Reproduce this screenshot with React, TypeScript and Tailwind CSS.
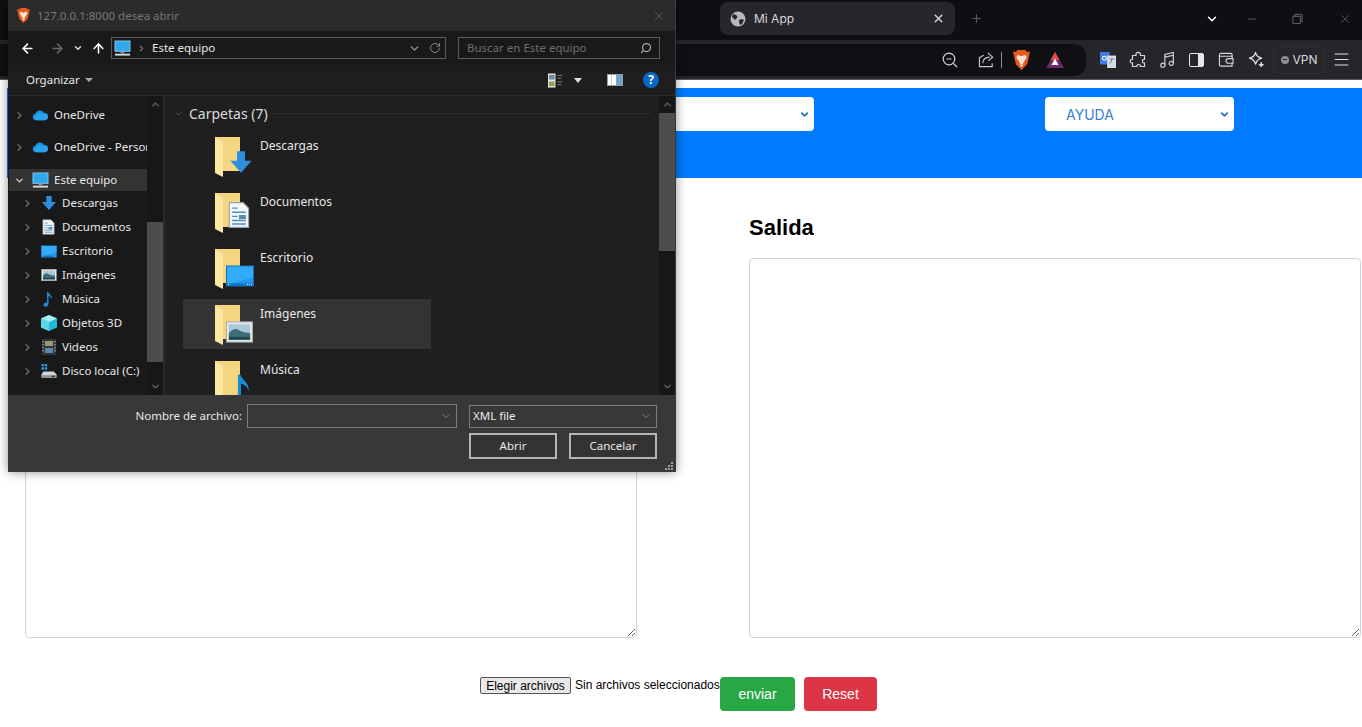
import { ChevronDown, ChevronRight, ChevronUp, Minus, Plus, X, ArrowLeft, ArrowRight, ArrowUp, RotateCw, Search, Menu } from "lucide-react"

const folderBack = "#f3d67f"
const folderFront = "#fbe6a2"

function PcIcon({ className }: { className?: string }) {
  return (
    <svg viewBox="0 0 18 18" className={className}>
      <rect x="1" y="1" width="16" height="11" fill="#2fa8ee" stroke="#9fd6f5" strokeWidth="0.8" />
      <rect x="7" y="12" width="4" height="2" fill="#8a9aa5" />
      <rect x="1" y="14.5" width="16" height="2" fill="#d6dde2" />
    </svg>
  )
}

function CloudIcon() {
  return (
    <svg viewBox="0 0 18 12" className="w-[17px] h-[12px]">
      <path d="M4 11.5a3.4 3.4 0 0 1-.5-6.7A5 5 0 0 1 12.6 3.6 4 4 0 0 1 17 7.7c0 2.2-1.6 3.8-3.8 3.8z" fill="#1a8fe0" />
      <path d="M5 11.5a2.6 2.6 0 0 1 0-5.2 3.6 3.6 0 0 1 6.6-1 3.2 3.2 0 0 1 5.4 2.6c0 2-1.5 3.6-3.6 3.6z" fill="#2aa2ee" />
    </svg>
  )
}

function DownArrow({ className }: { className?: string }) {
  return (
    <svg viewBox="0 0 18 18" className={className}>
      <path d="M6 1h6v7h5l-8 9-8-9h5z" fill="#2f8fdf" />
    </svg>
  )
}

function DocIcon({ className }: { className?: string }) {
  return (
    <svg viewBox="0 0 16 20" className={className}>
      <path d="M1 1h10l4 4v14H1z" fill="#f4f6f8" stroke="#9aa3ab" strokeWidth="0.8" />
      <path d="M3 5h4M3 8h10M3 11h4M3 14h10M3 16.5h10" stroke="#4e8fc4" strokeWidth="1" />
      <rect x="8" y="10" width="5" height="3" fill="#5b8aa8" />
    </svg>
  )
}

function DesktopIcon({ className }: { className?: string }) {
  return (
    <svg viewBox="0 0 28 21" className={className}>
      <rect x="0.5" y="0.5" width="27" height="20" fill="#1e98f0" stroke="#0f6fb8" />
      <path d="M1 1h26v11L1 19z" fill="#33abf8" />
      <rect x="1" y="18" width="26" height="2" fill="#0e71bd" />
      <path d="M2 19h1M21 19h1M23 19h1M25 19h1" stroke="#e8f4fc" strokeWidth="1" />
    </svg>
  )
}

function PictureIcon({ className }: { className?: string }) {
  return (
    <svg viewBox="0 0 28 22" className={className}>
      <rect x="0.5" y="0.5" width="27" height="21" fill="#e6e8ea" stroke="#a8a8a8" />
      <rect x="3" y="3" width="22" height="16" fill="#a9c8d8" />
      <path d="M3 12c4-4 7-5 10-3s8 3 12 3v7H3z" fill="#3f6f73" />
      <path d="M3 16h22v3H3z" fill="#22484f" />
    </svg>
  )
}

function NoteIcon({ className }: { className?: string }) {
  return (
    <svg viewBox="0 0 14 22" className={className}>
      <path d="M5 1h1.6c.3 3 6 5 5.4 11-.7-3-2.500-4.500-5-5v10.500c0 2.500-2.200 4-4 4s-3-1-3-2.500c0-2.200 2.500-3.500 5-3z" fill="#1b8cd8" />
    </svg>
  )
}

function CubeIcon({ className }: { className?: string }) {
  return (
    <svg viewBox="0 0 16 16" className={className}>
      <path d="M8 0l8 3.500v9L8 16 0 12.500v-9z" fill="#22b6d8" />
      <path d="M8 0l8 3.500L8 7 0 3.500z" fill="#a8ecf5" />
      <path d="M0 3.500 8 7v9L0 12.500z" fill="#5fd5ea" />
    </svg>
  )
}

function VideoIcon({ className }: { className?: string }) {
  return (
    <svg viewBox="0 0 14 16" className={className}>
      <rect width="14" height="16" fill="#31363c" />
      <rect x="3" y="2" width="8" height="5" fill="#9a9a6a" />
      <rect x="3" y="9" width="8" height="5" fill="#5e86a8" />
      <path d="M1 2v12M13 2v12" stroke="#c0c6cc" strokeWidth="1" strokeDasharray="1.500 1.500" />
    </svg>
  )
}

function DiskIcon({ className }: { className?: string }) {
  return (
    <svg viewBox="0 0 16 15" className={className}>
      <rect x="0" y="0" width="2.500" height="2.500" fill="#2aa2ee" />
      <rect x="3.500" y="0" width="2.500" height="2.500" fill="#2aa2ee" />
      <rect x="0" y="3.500" width="2.500" height="2.500" fill="#2aa2ee" />
      <rect x="3.500" y="3.500" width="2.500" height="2.500" fill="#2aa2ee" />
      <path d="M2 8h11l3 3v3H0v-3z" fill="#d0d4d8" />
      <rect x="0" y="12" width="16" height="3" fill="#8e9499" />
      <rect x="11" y="12.500" width="3" height="1.500" fill="#2c2c2c" />
    </svg>
  )
}

function LionIcon({ className }: { className?: string }) {
  return (
    <svg viewBox="0 0 18 21" className={className}>
      <path d="M5 0h8l2 2 3-.5-1.500 7L15 15l-6 6-6-6L1.500 8.500 0 1.500 3 2z" fill="#e9591e" />
      <path d="M5 5l4 1.500L13 5l1.500 3-3 4-1 3h-3l-1-3-3-4z" fill="#fbe3d0" />
      <path d="M7 15.500h4L9 18z" fill="#fff" />
    </svg>
  )
}

function ShareIcon({ className }: { className?: string }) {
  return (
    <svg viewBox="0 0 18 18" fill="none" stroke="#c8c8cc" strokeWidth="1.200" className={className}>
      <path d="M6 4.500 1.500 7v9.500h13.500V13" />
      <path d="M5 13c0-4 3-6.500 7.500-6.500M10.500 2 15.500 6.500 11 10.500" />
    </svg>
  )
}

function PuzzleIcon({ className }: { className?: string }) {
  return (
    <svg viewBox="0 0 18 18" fill="none" stroke="#d6d6da" strokeWidth="1.200" className={className}>
      <path d="M7 3.500a2.200 2.200 0 0 1 4.400 0c0 .6 0 1 .1 1h4v3.800c-2.800-.5-2.800 4.200 0 3.700v3.500h-4c.5-2.700-4.200-2.700-3.700 0H3.500v-3.500c-3 .5-3-4.200 0-3.700V4.500H7z" />
    </svg>
  )
}

function NotesIcon({ className }: { className?: string }) {
  return (
    <svg viewBox="0 0 16 18" fill="none" stroke="#d6d6da" strokeWidth="1.200" className={className}>
      <circle cx="3" cy="15" r="2.200" />
      <circle cx="12" cy="13" r="2.200" />
      <path d="M5.200 15V3.500L14.200 1.500v11.500M5.200 6.500l9-2" />
    </svg>
  )
}

function WalletIcon({ className }: { className?: string }) {
  return (
    <svg viewBox="0 0 16 16" fill="none" stroke="#d6d6da" strokeWidth="1.200" className={className}>
      <path d="M14.500 5V3a1.500 1.500 0 0 0-1.500-1.500H2.500A1.500 1.500 0 0 0 1 3v10.500A1.500 1.500 0 0 0 2.500 15H14.500v-3" />
      <path d="M1 4.500h13.500v2.500M10.500 7h5v5h-5a2.500 2.500 0 0 1 0-5z" />
    </svg>
  )
}

function StarIcon({ className }: { className?: string }) {
  return (
    <svg viewBox="0 0 18 18" fill="none" stroke="#e2e2e6" strokeWidth="1.300" className={className}>
      <path d="M8 1.500c.6 3.500 3 5.500 6.500 6-3.500.7-5.500 3-6.500 6.500-.8-3.500-3-5.800-6.500-6.500 3.500-.5 5.800-2.500 6.500-6z" strokeLinejoin="round" />
      <path d="M14 12v5M11.500 14.500h5" strokeWidth="1.600" />
    </svg>
  )
}

const treeTop = [
  { label: "OneDrive - Personal", cloud: true },
]

const treeItems = [
  { label: "Descargas", icon: <DownArrow className="w-[16px] h-[16px]" /> },
  { label: "Documentos", icon: <DocIcon className="w-[13px] h-[16px]" /> },
  { label: "Escritorio", icon: <DesktopIcon className="w-[16px] h-[13px]" /> },
  { label: "Imágenes", icon: <PictureIcon className="w-[16px] h-[12px]" /> },
  { label: "Música", icon: <NoteIcon className="w-[11px] h-[16px]" /> },
  { label: "Objetos 3D", icon: <CubeIcon className="w-[16px] h-[16px]" /> },
  { label: "Videos", icon: <VideoIcon className="w-[14px] h-[16px]" /> },
  { label: "Disco local (C:)", icon: <DiskIcon className="w-[16px] h-[14px]" /> },
]

function Scrollbar({ before, thumb }: { before: number; thumb: number }) {
  return (
    <div className="w-[16px] h-full shrink-0 bg-[#171717] flex flex-col items-center">
      <div className="h-[17px] flex items-center justify-center shrink-0">
        <ChevronUp className="w-[11px] h-[11px] text-[#666]" strokeWidth={3} />
      </div>
      <div className="shrink-0" style={{ height: before }} />
      <div className="w-full bg-[#4d4d4d] shrink-0" style={{ height: thumb }} />
      <div className="flex-1" />
      <div className="h-[17px] flex items-center justify-center shrink-0">
        <ChevronDown className="w-[11px] h-[11px] text-[#666]" strokeWidth={3} />
      </div>
    </div>
  )
}

function FolderRow({ name, overlay, active }: { name: string; overlay: React.ReactNode; active?: boolean }) {
  return (
    <div className={`relative shrink-0 h-[50px] w-[248px] ml-[18px] mb-[6px] pl-[77px] pt-[6px] ${active ? "bg-[#333333]" : ""}`}>
      <svg viewBox="0 0 26 40" className="absolute left-[32px] top-[6px] w-[26px] h-[40px]">
        <rect x="0" y="0" width="25" height="34" fill={folderBack} />
        <path d="M0 1 8 5v35L0 36z" fill={folderFront} />
      </svg>
      {overlay}
      <span className="text-[12px] leading-[18px] text-[#e8e8e8]">{name}</span>
    </div>
  )
}

export default function App() {
  return (
    <div className="relative w-[1362px] h-[727px] overflow-hidden bg-white font-['Liberation_Sans',sans-serif]">
      {/* barra de pestañas */}
      <div className="h-10 bg-[#0f0f13] flex items-center pl-[720px] pb-[3px] text-[#d8d8dc] font-['Inter',sans-serif]">
        <div className="w-[235px] h-[33px] rounded-lg bg-[#26262b] flex items-center pl-[10px] pr-[10px]">
          <svg viewBox="0 0 16 16" className="w-[16px] h-[16px]">
            <circle cx="8" cy="8" r="7.500" fill="#b8b8bc" />
            <path d="M3 3c2 0 3 1 4 2s0 2-1 3-2 1-2 0-2-1-2-2zM9 9l3-1 2 1-2 4-2 1-1-3z" fill="#26262b" />
          </svg>
          <span className="ml-[8px] text-[12px]">Mi App</span>
          <X className="ml-auto w-[13px] h-[13px] text-[#d8d8dc]" strokeWidth={2.5} />
        </div>
        <Plus className="ml-[15px] w-[13px] h-[13px] text-[#5c5c60]" strokeWidth={2} />
        <ChevronDown className="ml-[222px] w-[14px] h-[14px] text-white" strokeWidth={2.5} />
        <Minus className="ml-[27px] w-[12px] h-[12px] text-[#6a6a6e]" strokeWidth={1.5} />
        <svg viewBox="0 0 12 12" fill="none" stroke="#6a6a6e" className="ml-[34px] w-[11px] h-[12px]">
          <path d="M3 3V1h8v8H9M1 3h8v8H1z" />
        </svg>
        <X className="ml-[35px] w-[14px] h-[14px] text-[#6a6a6e]" strokeWidth={1.2} />
      </div>

      {/* barra de direcciones */}
      <div className="h-10 bg-[#25252a] border-b border-b-[#5a5a5e] flex items-center text-[#d8d8dc] font-['Inter',sans-serif]">
        <div className="w-[1086px] h-[32px] rounded-r-xl bg-[#101014] flex items-center pl-[942px] shrink-0">
          <svg viewBox="0 0 16 16" fill="none" stroke="#d0d0d4" strokeWidth="1.200" className="w-[16px] h-[16px] shrink-0">
            <circle cx="7" cy="7" r="5.800" />
            <path d="M4.500 7h5M11.500 11.500 15 15" />
          </svg>
          <ShareIcon className="ml-[20px] w-[17px] h-[17px] shrink-0" />
          <div className="ml-[6px] w-px h-[16px] bg-[#8a8a8e] shrink-0" />
          <LionIcon className="ml-[11px] w-[17px] h-[20px] shrink-0" />
          <svg viewBox="0 0 18 16" className="ml-[16px] w-[18px] h-[16px] shrink-0">
            <path d="M9 0 18 16H0z" fill="#6a2b6e" />
            <path d="M9 0 13.500 8h-9z" fill="#e34d3a" />
            <path d="M9 6.500 12.500 13h-7z" fill="#fff" />
          </svg>
        </div>
        <svg viewBox="0 0 18 18" className="ml-[14px] w-[16px] h-[16px] shrink-0">
          <rect x="0" y="0" width="11" height="14" fill="#3d7fe0" />
          <rect x="8" y="4" width="10" height="14" fill="#d5dde4" />
          <circle cx="5" cy="7" r="2.200" fill="none" stroke="#fff" strokeWidth="1.200" />
          <path d="M11 8h5M13 8c0 3-1 4-2 5" stroke="#5a6a78" fill="none" />
        </svg>
        <PuzzleIcon className="ml-[13px] w-[18px] h-[18px] shrink-0" />
        <NotesIcon className="ml-[13px] w-[15px] h-[17px] shrink-0" />
        <div className="ml-[14px] w-[15px] h-[14px] rounded-[2px] border-[1.5px] border-[#e8e8ec] flex justify-end shrink-0">
          <div className="w-[5px] h-full bg-[#e8e8ec]" />
        </div>
        <WalletIcon className="ml-[14px] w-[16px] h-[15px] shrink-0" />
        <StarIcon className="ml-[14px] w-[17px] h-[17px] shrink-0" />
        <div className="ml-[8px] w-[52px] h-[28px] rounded-lg border border-[#2f2f34] flex items-center justify-center gap-[4px] text-[12px] shrink-0">
          <span className="w-[8px] h-[8px] rounded-full bg-[#8e8e96] flex items-center justify-center">
            <span className="w-[4px] h-px bg-[#25252a]" />
          </span>
          VPN
        </div>
        <Menu className="ml-[7px] w-[19px] h-[19px] text-[#e0e0e4] shrink-0" strokeWidth={1.4} />
      </div>

      {/* pagina */}
      <div className="mt-2 ml-[7px] h-[90px] bg-[#007bff] pt-[9px] pl-[618px] flex gap-[231px]">
        <div className="w-[189px] h-[34px] rounded bg-white flex items-center justify-end pr-[4px]">
          <ChevronDown className="w-[11px] h-[11px] text-[#2a70c0]" strokeWidth={4} />
        </div>
        <div className="w-[189px] h-[34px] rounded bg-white flex items-center justify-between pl-[21px] pr-[4px] text-[#3a7fd0] text-[14px] font-['Inter',sans-serif]">
          AYUDA
          <ChevronDown className="w-[11px] h-[11px] text-[#2a70c0]" strokeWidth={4} />
        </div>
      </div>

      <div className="pl-[25px] pt-[35px] grid grid-cols-[612px_612px] gap-x-[112px]">
        <div className="flex flex-col">
          <div className="h-[45px]" />
          <textarea className="w-[612px] h-[380px] border border-[#ced4da] rounded bg-white" />
        </div>
        <div className="flex flex-col">
          <h2 className="h-[45px] text-[22px] leading-[29px] font-bold text-black">Salida</h2>
          <textarea className="w-[612px] h-[380px] border border-[#ced4da] rounded bg-white" />
        </div>
      </div>

      <div className="pl-[480px] mt-[39px] flex items-start text-[13.33px] text-black">
        <button className="h-[17px] w-[91px] bg-[#e9e9e9] border border-[#555] rounded-[2px] text-[12px] leading-[14px] text-black">Elegir archivos</button>
        <span className="ml-[4px] w-[145px] text-[12px] leading-[17px] whitespace-nowrap">Sin archivos seleccionados</span>
        <button className="w-[75px] h-[34px] rounded bg-[#28a745] text-white text-[14px]">enviar</button>
        <button className="ml-[9px] w-[73px] h-[34px] rounded bg-[#dc3545] text-white text-[14px]">Reset</button>
      </div>

      {/* dialogo de abrir archivo */}
      <div className="absolute left-2 top-0 w-[668px] h-[472px] flex flex-col shadow-[0_0_10px_rgba(0,0,0,0.45)] border-r border-r-[#3a3a3a] font-['Noto_Sans',sans-serif] text-[12px] text-[#e8e8e8]">
        <div className="h-[31px] shrink-0 bg-[#2b2b2b] flex items-center pl-[9px] pr-[9px] text-[11.5px] text-[#777]">
          <LionIcon className="w-[13px] h-[15px]" />
          <span className="ml-[7px]">127.0.0.1:8000 desea abrir</span>
          <X className="ml-auto w-[14px] h-[14px] text-[#777]" strokeWidth={1.2} />
        </div>

        <div className="h-[34px] shrink-0 bg-[#191919] flex items-center pl-[12px]">
          <ArrowLeft className="w-[15px] h-[15px] text-white" strokeWidth={2.5} />
          <ArrowRight className="ml-[15px] w-[15px] h-[15px] text-[#6a6a6a]" strokeWidth={2.5} />
          <ChevronDown className="ml-[8px] w-[10px] h-[10px] text-[#ddd]" strokeWidth={3.5} />
          <ArrowUp className="ml-[8px] w-[15px] h-[15px] text-white" strokeWidth={2.5} />
          <div className="ml-[5px] w-[335px] h-[22px] border border-[#5c5c5c] flex items-center pl-[2px]">
            <PcIcon className="w-[17px] h-[17px]" />
            <ChevronRight className="ml-[6px] w-[9px] h-[9px] text-[#777]" strokeWidth={3} />
            <span className="ml-[6px] text-[11.5px]">Este equipo</span>
            <ChevronDown className="ml-auto mr-[4px] w-[13px] h-[13px] text-[#999]" strokeWidth={2.5} />
            <RotateCw className="ml-[4px] mr-[4px] w-[12px] h-[12px] text-[#888]" strokeWidth={2} />
          </div>
          <div className="ml-[12px] w-[202px] h-[22px] border border-[#5c5c5c] flex items-center pl-[8px] pr-[7px] text-[11.5px] text-[#6e6e6e]">
            Buscar en Este equipo
            <Search className="ml-auto w-[12px] h-[12px] text-[#aaa] -scale-x-100" strokeWidth={2.5} />
          </div>
        </div>

        <div className="h-[31px] shrink-0 bg-[#1e1e1e] border-b border-b-[#2c2c2c] flex items-center pl-[18px] pr-[16px]">
          <span className="text-[11.5px]">Organizar</span>
          <span className="ml-[5px] w-0 h-0 border-x-[4px] border-x-transparent border-t-[4px] border-t-[#aaa]" />
          <svg viewBox="0 0 16 15" className="ml-auto w-[15px] h-[15px]">
            <rect width="8" height="15" fill="#e8e8e8" />
            <rect x="1" y="1.500" width="6" height="5" fill="#6a8aa0" />
            <rect x="1" y="8.500" width="6" height="5" fill="#9a9a50" />
            <path d="M10 2h5M10 5h4M10 9h5M10 12h4" stroke="#888" />
          </svg>
          <span className="ml-[11px] w-0 h-0 border-x-[4px] border-x-transparent border-t-[5px] border-t-[#ddd]" />
          <svg viewBox="0 0 16 12" className="ml-[25px] w-[16px] h-[12px]">
            <rect width="16" height="12" fill="#9aa0a6" />
            <rect x="1" y="1" width="3.500" height="10" fill="#fff" />
            <rect x="5" y="1" width="4" height="10" fill="#fff" />
            <rect x="10" y="1" width="5" height="10" fill="#64a6dc" />
          </svg>
          <span className="ml-[20px] w-[16px] h-[16px] rounded-full bg-[#0a68c4] flex items-center justify-center text-[12px] leading-none font-bold text-white">?</span>
        </div>

        <div className="h-[299px] shrink-0 flex bg-[#1f1f1f] overflow-hidden">
          <div className="w-[157px] shrink-0 bg-[#191919] border-r-2 border-r-[#2a2a2a] flex">
            <div className="w-[139px] shrink-0 pt-[8px] overflow-hidden whitespace-nowrap">
              <div className="h-[22px] mb-[10px] flex items-center pl-[6px]">
                <ChevronRight className="w-[11px] h-[11px] text-[#6c6c6c] shrink-0" strokeWidth={3} />
                <span className="ml-[7px] shrink-0"><CloudIcon /></span>
                <span className="ml-[5px] text-[11.5px]">OneDrive</span>
              </div>
              {treeTop.map((t) => (
                <div key={t.label} className="h-[22px] mb-[11px] flex items-center pl-[6px]">
                  <ChevronRight className="w-[11px] h-[11px] text-[#6c6c6c] shrink-0" strokeWidth={3} />
                  <span className="ml-[7px] shrink-0"><CloudIcon /></span>
                  <span className="ml-[5px] text-[11.5px]">{t.label}</span>
                </div>
              ))}
              <div className="h-[22px] ml-[1px] bg-[#333333] flex items-center pl-[5px]">
                <ChevronDown className="w-[11px] h-[11px] text-[#cfcfcf] shrink-0" strokeWidth={3} />
                <PcIcon className="ml-[7px] w-[17px] h-[17px] shrink-0" />
                <span className="ml-[5px] text-[11.5px]">Este equipo</span>
              </div>
              {treeItems.map((t) => (
                <div key={t.label} className="h-[24px] flex items-center pl-[14px]">
                  <ChevronRight className="w-[11px] h-[11px] text-[#6c6c6c] shrink-0" strokeWidth={3} />
                  <span className="ml-[7px] w-[17px] flex justify-center shrink-0">{t.icon}</span>
                  <span className="ml-[5px] text-[11.5px]">{t.label}</span>
                </div>
              ))}
            </div>
            <Scrollbar before={109} thumb={140} />
          </div>

          <div className="flex-1 min-w-0 flex flex-col">
            <div className="h-[35px] shrink-0 flex items-center pl-[7px] pr-[8px]">
              <ChevronDown className="w-[13px] h-[13px] text-[#666]" strokeWidth={1.2} />
              <span className="ml-[4px] text-[14px] leading-none text-[#dcdcdc]">Carpetas (7)</span>
              <div className="ml-[6px] flex-1 h-px bg-[#2e2e2e]" />
            </div>
            <FolderRow name="Descargas" overlay={<DownArrow className="absolute left-[46px] top-[19px] w-[24px] h-[24px]" />} />
            <FolderRow name="Documentos" overlay={<DocIcon className="absolute left-[45px] top-[14px] w-[22px] h-[28px]" />} />
            <FolderRow name="Escritorio" overlay={<DesktopIcon className="absolute left-[43px] top-[22px] w-[28px] h-[22px]" />} />
            <FolderRow name="Imágenes" active overlay={<PictureIcon className="absolute left-[43px] top-[22px] w-[27px] h-[22px]" />} />
            <FolderRow name="Música" overlay={<NoteIcon className="absolute left-[47px] top-[18px] w-[22px] h-[34px]" />} />
          </div>

          <Scrollbar before={0} thumb={138} />
        </div>

        <div className="relative flex-1 bg-[#383838] flex flex-col items-end pt-[9px] pr-[18px]">
          <div className="flex items-center h-[24px]">
            <span className="mr-[5px] text-[11.5px]">Nombre de archivo:</span>
            <div className="w-[210px] h-[24px] border border-[#7e7e7e] flex items-center justify-end pr-[4px]">
              <ChevronDown className="w-[12px] h-[12px] text-[#999]" strokeWidth={1.5} />
            </div>
            <div className="ml-[12px] w-[188px] h-[23px] border border-[#7e7e7e] flex items-center justify-between pl-[3px] pr-[4px] text-[11.5px]">
              XML file
              <ChevronDown className="w-[12px] h-[12px] text-[#999]" strokeWidth={1.5} />
            </div>
          </div>
          <div className="mt-[5px] flex gap-[12px]">
            <button className="w-[88px] h-[26px] border-2 border-[#b4b4b4] bg-[#333333] text-[11.5px] text-[#e8e8e8]">Abrir</button>
            <button className="w-[88px] h-[26px] border-2 border-[#b4b4b4] bg-[#333333] text-[11.5px] text-[#e8e8e8]">Cancelar</button>
          </div>
          <svg viewBox="0 0 9 9" className="absolute right-[1px] bottom-[1px] w-[9px] h-[9px]">
            <path d="M6 0h2v2H6zM3 3h2v2H3zM6 3h2v2H6zM0 6h2v2H0zM3 6h2v2H3zM6 6h2v2H6z" fill="#a0a0a0" />
          </svg>
        </div>
      </div>
    </div>
  )
}
